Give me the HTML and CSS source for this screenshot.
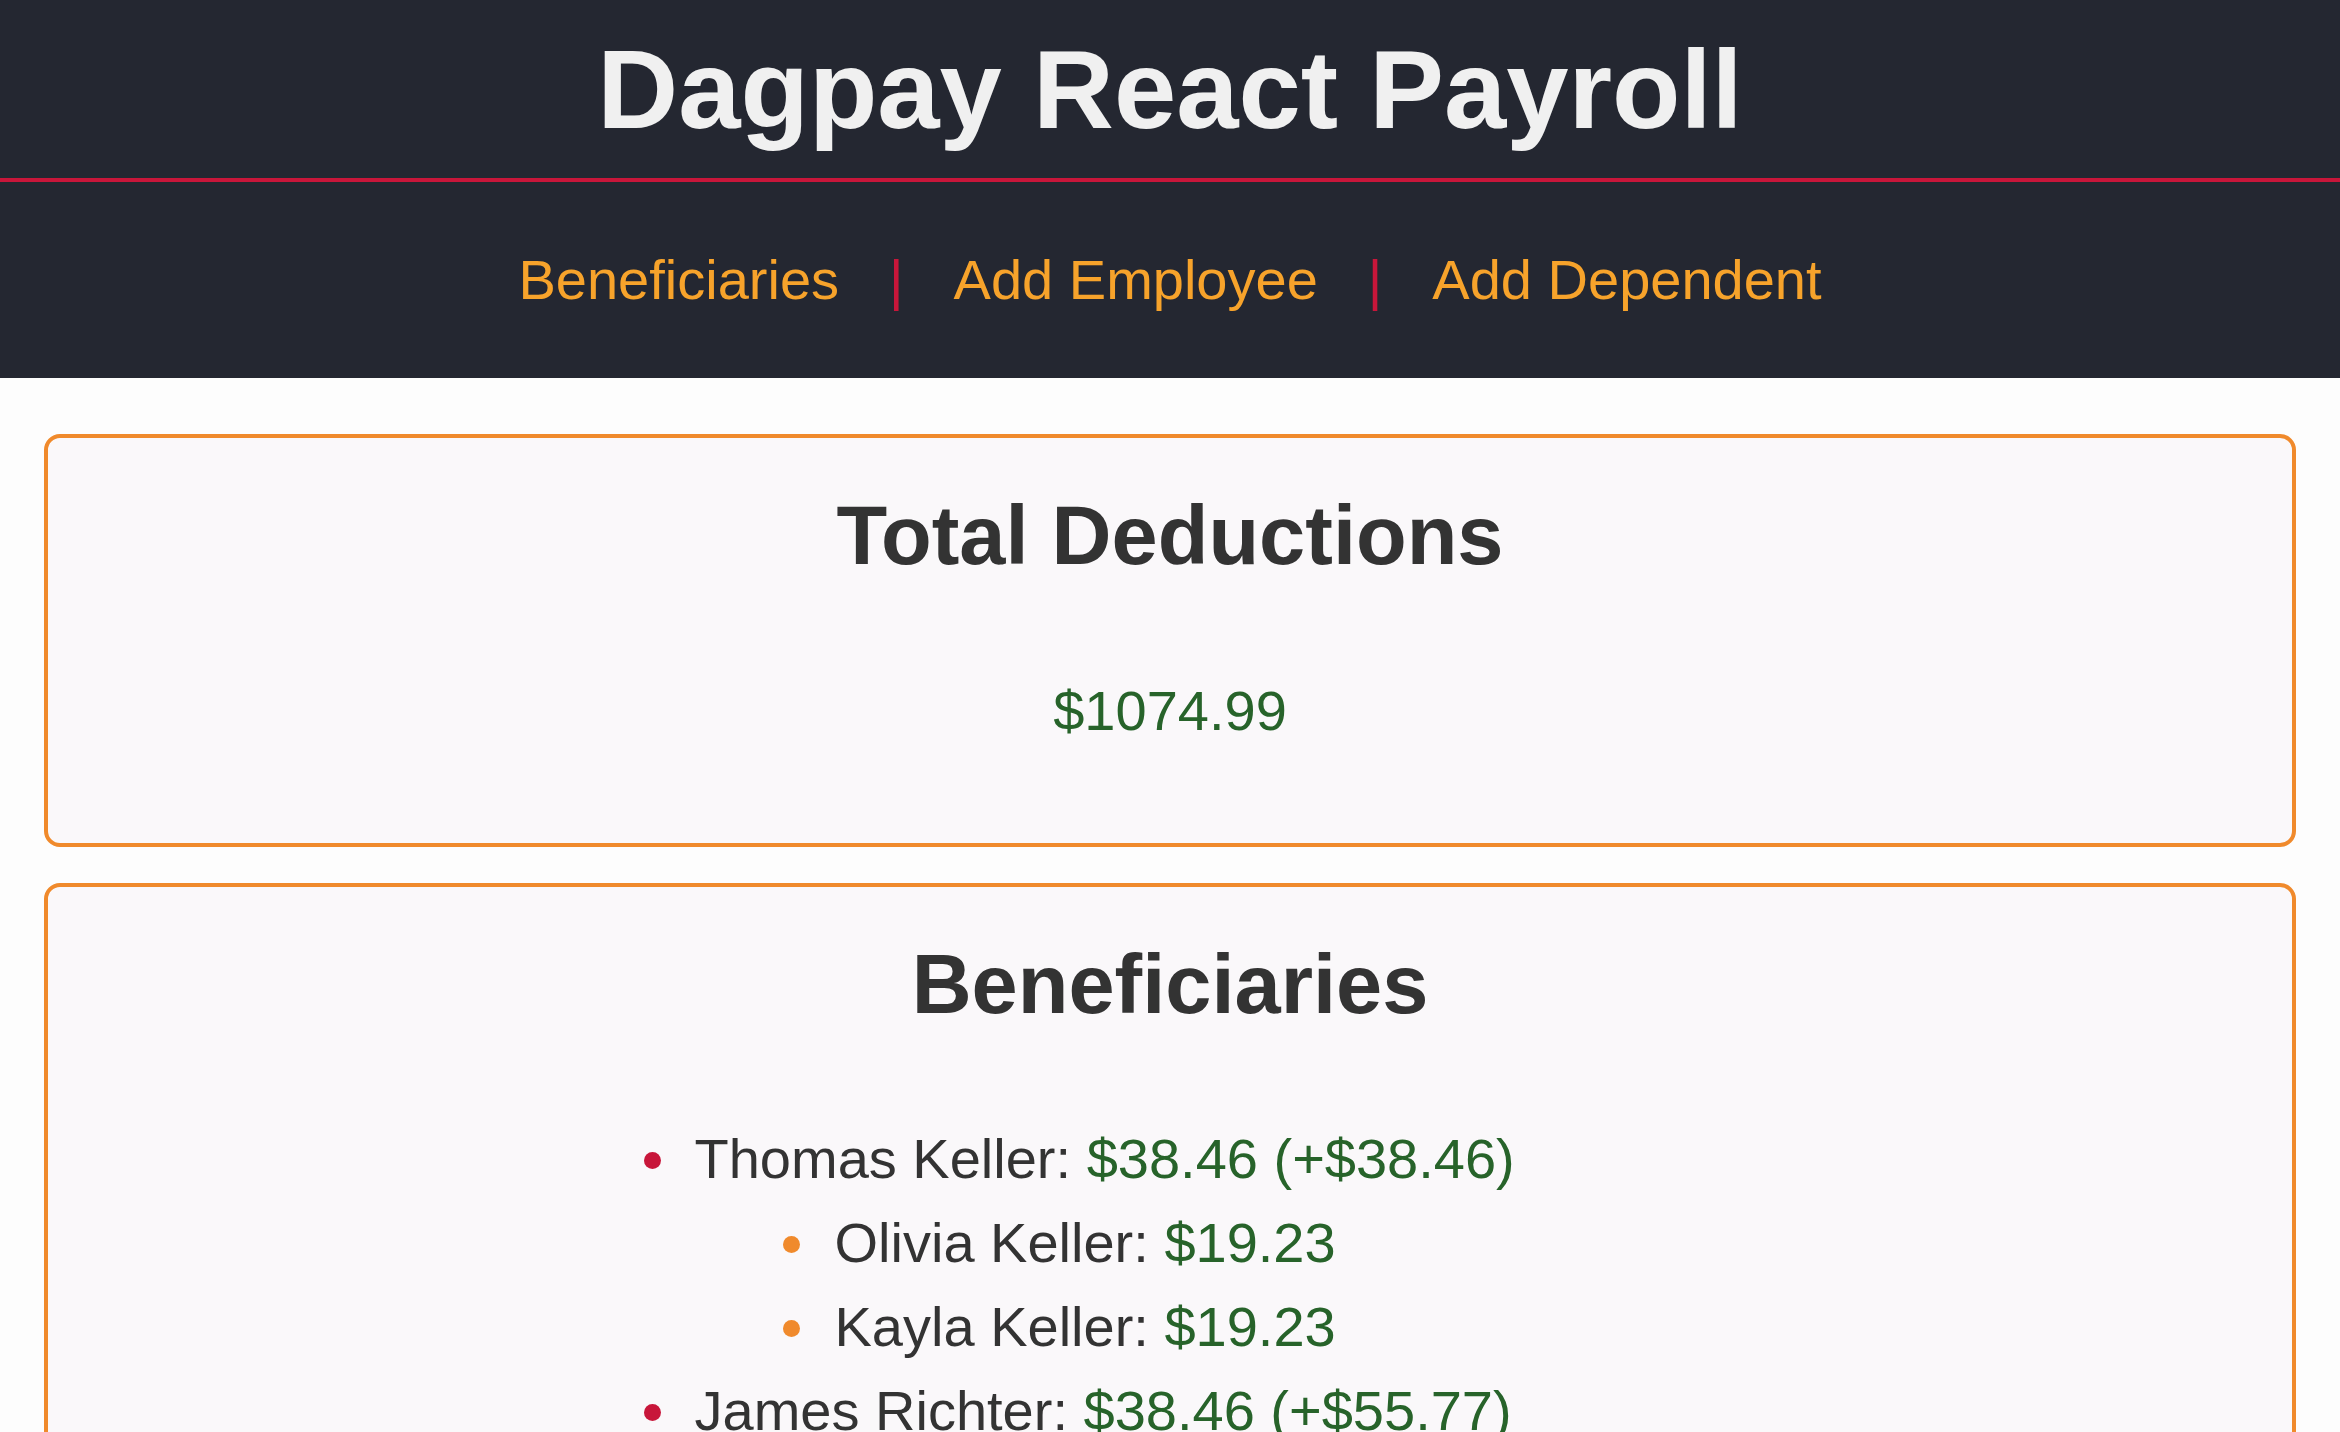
FILE: index.html
```html
<!DOCTYPE html>
<html lang="en">
<head>
<meta charset="utf-8">
<title>Dagpay React Payroll</title>
<link rel="stylesheet" href="styles.css">
</head>
<body>
<header class="site-header">
  <h1 class="site-title">Dagpay React Payroll</h1>
  <nav class="site-nav">
    <a class="nav-link" href="#">Beneficiaries</a>
    <span class="nav-sep">|</span>
    <a class="nav-link" href="#">Add Employee</a>
    <span class="nav-sep">|</span>
    <a class="nav-link" href="#">Add Dependent</a>
  </nav>
</header>
<main class="content">
  <section class="card">
    <h2 class="card-title">Total Deductions</h2>
    <p class="total-amount">$1074.99</p>
  </section>
  <section class="card">
    <h2 class="card-title">Beneficiaries</h2>
    <ul class="emp-list">
      <li class="emp">Thomas Keller: <span class="money">$38.46 (+$38.46)</span>
        <ul class="dep-list">
          <li class="dep">Olivia Keller: <span class="money">$19.23</span></li>
          <li class="dep">Kayla Keller: <span class="money">$19.23</span></li>
        </ul>
      </li>
      <li class="emp">James Richter: <span class="money">$38.46 (+$55.77)</span>
        <ul class="dep-list">
          <li class="dep">Anna Richter: <span class="money">$19.23</span></li>
          <li class="dep">Lukas Richter: <span class="money">$19.23</span></li>
          <li class="dep">Alice Richter: <span class="money">$17.31</span></li>
        </ul>
      </li>
    </ul>
  </section>
</main>
</body>
</html>
```
FILE: styles.css
```css
html, body {
  margin: 0;
  padding: 0;
}
body {
  background: #fdfdfd;
  font-family: "Liberation Sans", Arial, sans-serif;
  color: #333333;
}
.site-header {
  background: #242731;
  padding-top: 25px;
}
.site-title {
  margin: 0;
  padding-bottom: 24px;
  border-bottom: 4px solid #c8163a;
  font-size: 112px;
  font-weight: 700;
  line-height: normal;
  text-align: center;
  color: #f0f0f0;
}
.site-nav {
  display: flex;
  justify-content: center;
  align-items: baseline;
  gap: 50px;
  padding: 65px 0 66px;
  font-size: 56px;
  line-height: normal;
}
.nav-link {
  color: #f7a32b;
  text-decoration: none;
}
.nav-sep {
  color: #c8163a;
}
.content {
  display: flex;
  flex-direction: column;
  gap: 36px;
  padding: 56px 44px 0;
}
.card {
  background: #faf8fa;
  border: 4px solid #f08a2c;
  border-radius: 16px;
  padding: 50px 32px 100px;
  text-align: center;
}
.card-title {
  margin: 0;
  font-size: 83px;
  font-weight: 700;
  line-height: normal;
  color: #333333;
}
.total-amount {
  margin: 94px 0 0;
  font-size: 56px;
  line-height: normal;
  color: #27632a;
}
.money {
  color: #27632a;
}
.emp-list {
  max-width: 1024px;
  margin: 84px auto 0;
  padding: 0 0 0 53px;
  text-align: left;
  font-size: 56px;
  line-height: 84px;
  color: #333333;
}
.emp {
  padding-left: 10px;
}
.emp::marker {
  color: #c8163a;
}
.dep-list {
  margin: 0;
  padding-left: 129px;
  list-style: disc;
}
.dep {
  padding-left: 11px;
}
.dep::marker {
  color: #f08a2c;
}
```
